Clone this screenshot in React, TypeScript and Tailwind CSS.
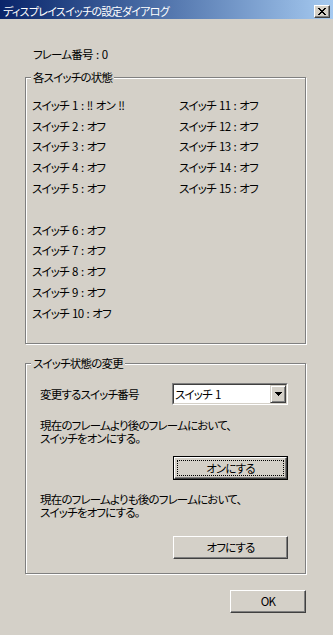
import React from "react";

const leftRows: (string | null)[] = [
  "スイッチ 1 : !! オン !!",
  "スイッチ 2 : オフ",
  "スイッチ 3 : オフ",
  "スイッチ 4 : オフ",
  "スイッチ 5 : オフ",
  null,
  "スイッチ 6 : オフ",
  "スイッチ 7 : オフ",
  "スイッチ 8 : オフ",
  "スイッチ 9 : オフ",
  "スイッチ 10 : オフ",
];

const rightRows = [
  "スイッチ 11 : オフ",
  "スイッチ 12 : オフ",
  "スイッチ 13 : オフ",
  "スイッチ 14 : オフ",
  "スイッチ 15 : オフ",
];

// classic raised 3D edge
const raised =
  "border border-t-white border-l-white border-r-[#404040] border-b-[#404040] shadow-[inset_-1px_-1px_0_#808080]";

function CloseGlyph() {
  return (
    <svg width="8" height="7" viewBox="0 0 8 7" shapeRendering="crispEdges">
      <g fill="#000">
        <rect x="0" y="0" width="2" height="1" />
        <rect x="6" y="0" width="2" height="1" />
        <rect x="1" y="1" width="2" height="1" />
        <rect x="5" y="1" width="2" height="1" />
        <rect x="2" y="2" width="4" height="1" />
        <rect x="3" y="3" width="2" height="1" />
        <rect x="2" y="4" width="4" height="1" />
        <rect x="1" y="5" width="2" height="1" />
        <rect x="5" y="5" width="2" height="1" />
        <rect x="0" y="6" width="2" height="1" />
        <rect x="6" y="6" width="2" height="1" />
      </g>
    </svg>
  );
}

function ArrowGlyph() {
  return (
    <svg width="7" height="4" viewBox="0 0 7 4" shapeRendering="crispEdges">
      <g fill="#000">
        <rect x="0" y="0" width="7" height="1" />
        <rect x="1" y="1" width="5" height="1" />
        <rect x="2" y="2" width="3" height="1" />
        <rect x="3" y="3" width="1" height="1" />
      </g>
    </svg>
  );
}

const GroupBox: React.FC<{ label: string; className?: string; children: React.ReactNode }> = ({
  label,
  className,
  children,
}) => (
  <div
    className={`relative border border-[#808080] shadow-[inset_1px_1px_0_#fff,1px_1px_0_#fff] ${className ?? ""}`}
  >
    <span className="absolute -top-[7px] left-[5px] bg-[#d4d0c8] px-[2px] leading-[13px] whitespace-nowrap">
      {label}
    </span>
    {children}
  </div>
);

export default function App() {
  return (
    <div className="w-[333px] h-[635px] bg-[#d4d0c8] flex flex-col text-[11.5px] tracking-[-0.8px] [word-spacing:1.5px] text-black font-['Noto_Sans_CJK_JP',sans-serif] [font-feature-settings:'palt'] overflow-hidden">
      {/* title bar */}
      <div className="h-[19px] flex items-end justify-between pb-[1px] pl-[3px] pr-[3px] bg-linear-to-r from-[#0a246a] to-[#a6caf0]">
        <span className="text-white text-[11px] leading-[14px] tracking-[-0.7px] whitespace-nowrap">
          ディスプレイスイッチの設定ダイアログ
        </span>
        <div className={`w-[16px] h-[13px] bg-[#d4d0c8] flex items-center justify-center ${raised}`}>
          <CloseGlyph />
        </div>
      </div>

      <div className="flex flex-col pl-[25px] pr-[27px]">
        <div className="mt-[29px] pl-[8px] leading-[13px]">フレーム番号 : 0</div>

        <GroupBox label="各スイッチの状態" className="mt-[16px] h-[267px]">
          <div className="grid grid-cols-[147px_1fr] pt-[17px] pl-[6px]">
            <div className="flex flex-col">
              {leftRows.map((r, i) => (
                <div key={i} className="h-[20.8px] flex items-center leading-[13px] whitespace-nowrap">
                  {r}
                </div>
              ))}
            </div>
            <div className="flex flex-col">
              {rightRows.map((r, i) => (
                <div key={i} className="h-[20.8px] flex items-center leading-[13px] whitespace-nowrap">
                  {r}
                </div>
              ))}
            </div>
          </div>
        </GroupBox>

        <GroupBox label="スイッチ状態の変更" className="mt-[19px] h-[211px]">
          <div className="flex flex-col pt-[19px] pl-[14px] pr-[17px]">
            <div className="flex items-center">
              <span className="w-[132px] leading-[13px] whitespace-nowrap">変更するスイッチ番号</span>
              <div className="w-[116px] h-[22px] border border-t-[#808080] border-l-[#808080] border-r-white border-b-white">
                <div className="h-full flex items-center bg-white border border-t-[#404040] border-l-[#404040] border-r-[#d4d0c8] border-b-[#d4d0c8]">
                  <span className="flex-1 pl-[1px] leading-[13px] whitespace-nowrap">スイッチ 1</span>
                  <div className="w-[16px] h-full flex items-center justify-center bg-[#d4d0c8] border border-t-[#d4d0c8] border-l-[#d4d0c8] border-r-[#404040] border-b-[#404040] shadow-[inset_1px_1px_0_#fff,inset_-1px_-1px_0_#808080]">
                    <ArrowGlyph />
                  </div>
                </div>
              </div>
            </div>

            <p className="mt-[14px] leading-[13px]">
              現在のフレームより後のフレームにおいて、
              <br />
              スイッチをオンにする。
            </p>

            <div className="mt-[11px] self-end w-[115px] h-[24px] border border-black">
              <div className={`h-full p-[2px] ${raised}`}>
                <div className="h-full flex items-center justify-center border border-dotted border-black leading-[13px]">
                  オンにする
                </div>
              </div>
            </div>

            <p className="mt-[13px] leading-[13px]">
              現在のフレームよりも後のフレームにおいて、
              <br />
              スイッチをオフにする。
            </p>

            <div className={`mt-[17px] self-end w-[115px] h-[23px] flex items-center justify-center leading-[13px] ${raised}`}>
              オフにする
            </div>
          </div>
        </GroupBox>

        <div className={`mt-[16px] self-end w-[76px] h-[23px] flex items-center justify-center leading-[13px] ${raised}`}>
          OK
        </div>
      </div>
    </div>
  );
}
